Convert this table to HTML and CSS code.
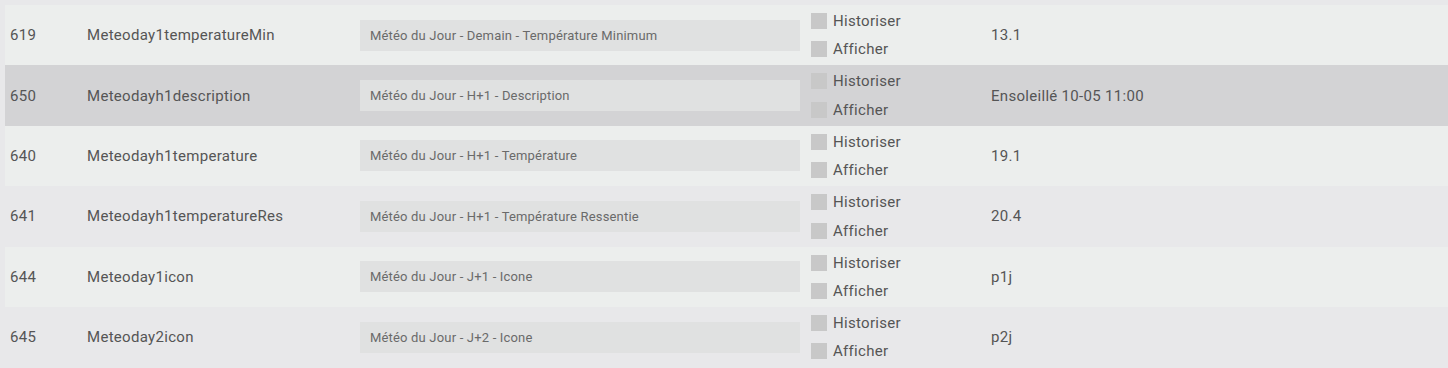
FILE: index.html
```html
<!DOCTYPE html>
<html lang="fr">
<head>
<meta charset="utf-8">
<link rel="stylesheet" href="styles.css">
</head>
<body>
<div class="table">
  <div class="row light">
    <div class="c-id">619</div>
    <div class="c-name">Meteoday1temperatureMin</div>
    <div class="c-desc"><div class="input">Météo du Jour - Demain - Température Minimum</div></div>
    <div class="c-opts">
      <label class="opt"><span class="box"></span>Historiser</label>
      <label class="opt"><span class="box"></span>Afficher</label>
    </div>
    <div class="c-val">13.1</div>
  </div>
  <div class="row hover">
    <div class="c-id">650</div>
    <div class="c-name">Meteodayh1description</div>
    <div class="c-desc"><div class="input">Météo du Jour - H+1 - Description</div></div>
    <div class="c-opts">
      <label class="opt"><span class="box"></span>Historiser</label>
      <label class="opt"><span class="box"></span>Afficher</label>
    </div>
    <div class="c-val">Ensoleillé 10-05 11:00</div>
  </div>
  <div class="row light">
    <div class="c-id">640</div>
    <div class="c-name">Meteodayh1temperature</div>
    <div class="c-desc"><div class="input">Météo du Jour - H+1 - Température</div></div>
    <div class="c-opts">
      <label class="opt"><span class="box"></span>Historiser</label>
      <label class="opt"><span class="box"></span>Afficher</label>
    </div>
    <div class="c-val">19.1</div>
  </div>
  <div class="row">
    <div class="c-id">641</div>
    <div class="c-name">Meteodayh1temperatureRes</div>
    <div class="c-desc"><div class="input">Météo du Jour - H+1 - Température Ressentie</div></div>
    <div class="c-opts">
      <label class="opt"><span class="box"></span>Historiser</label>
      <label class="opt"><span class="box"></span>Afficher</label>
    </div>
    <div class="c-val">20.4</div>
  </div>
  <div class="row light">
    <div class="c-id">644</div>
    <div class="c-name">Meteoday1icon</div>
    <div class="c-desc"><div class="input">Météo du Jour - J+1 - Icone</div></div>
    <div class="c-opts">
      <label class="opt"><span class="box"></span>Historiser</label>
      <label class="opt"><span class="box"></span>Afficher</label>
    </div>
    <div class="c-val">p1j</div>
  </div>
  <div class="row">
    <div class="c-id">645</div>
    <div class="c-name">Meteoday2icon</div>
    <div class="c-desc"><div class="input">Météo du Jour - J+2 - Icone</div></div>
    <div class="c-opts">
      <label class="opt"><span class="box"></span>Historiser</label>
      <label class="opt"><span class="box"></span>Afficher</label>
    </div>
    <div class="c-val">p2j</div>
  </div>
</div>
</body>
</html>
```

FILE: styles.css
```css
html, body {
  margin: 0;
  padding: 0;
  background: #e8e8ea;
}
body {
  font-family: Roboto, "Liberation Sans", sans-serif;
  color: #555555;
  font-size: 15px;
  letter-spacing: 0.3px;
  overflow: hidden;
}
.table {
  padding: 5px 0 0 5px;
  display: flex;
  flex-direction: column;
}
.row {
  display: flex;
  align-items: center;
  height: 60.4px;
}
.row.light {
  background: #eceeed;
}
.row.hover {
  background: #d3d3d5;
}
.c-id {
  width: 82px;
  padding-left: 5px;
  box-sizing: border-box;
}
.c-name {
  width: 273px;
}
.c-desc {
  width: 451px;
}
.input {
  width: 440px;
  height: 31px;
  box-sizing: border-box;
  background: #e0e1e1;
  font-size: 13px;
  letter-spacing: 0.18px;
  color: #6a6a6a;
  padding-left: 10px;
  display: flex;
  align-items: center;
}
.c-opts {
  width: 180px;
  display: flex;
  flex-direction: column;
}
.opt {
  display: flex;
  align-items: center;
  height: 28.5px;
}
.box {
  width: 16px;
  height: 16px;
  background: #c8c8c8;
  margin-right: 6px;
}
.c-val {
  flex: 1;
}
```
